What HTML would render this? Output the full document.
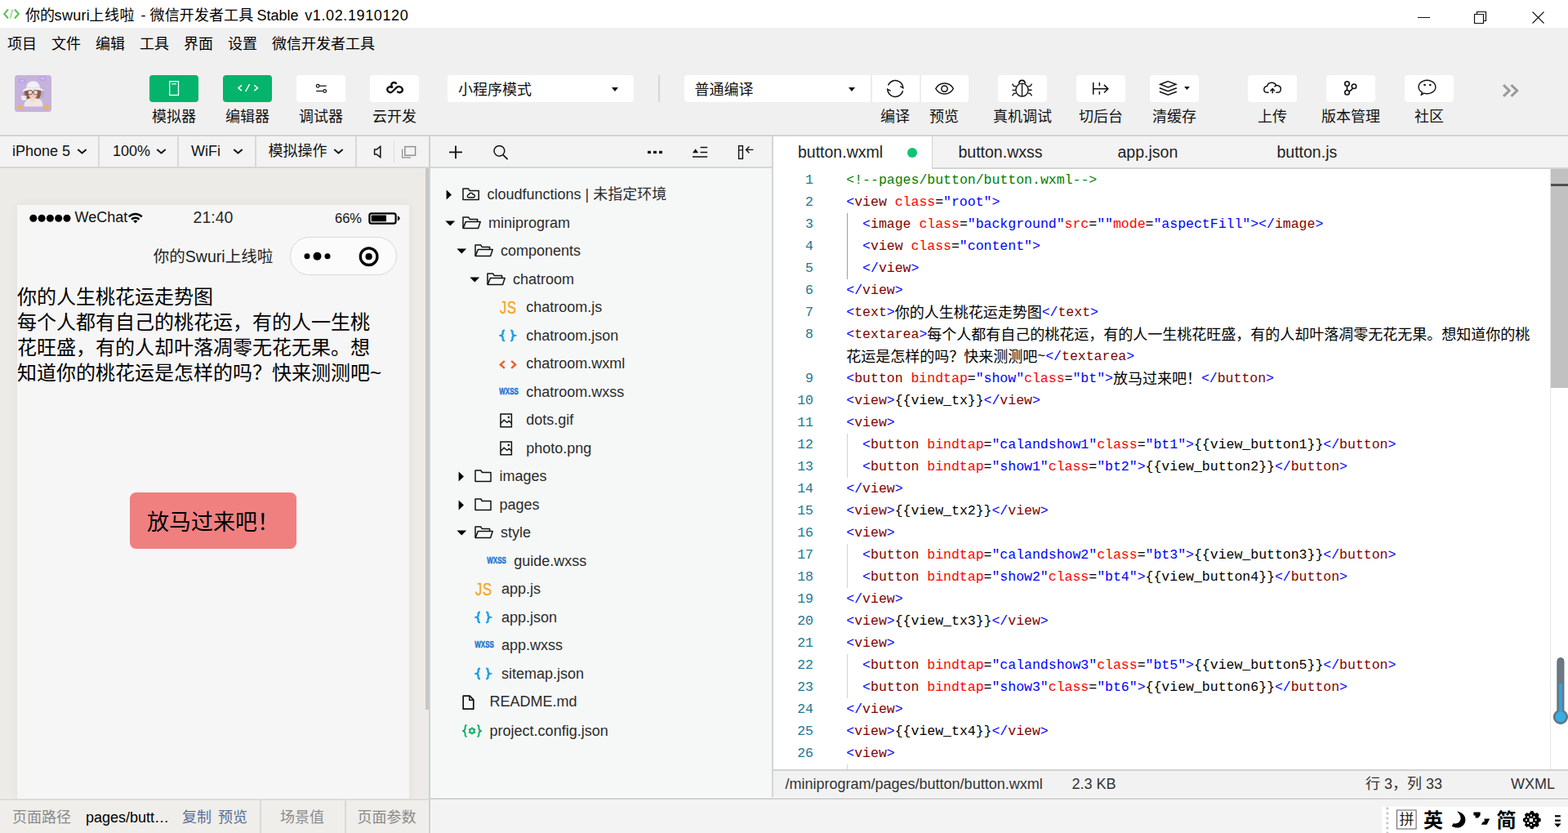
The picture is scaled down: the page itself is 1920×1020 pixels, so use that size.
<!DOCTYPE html><html lang="zh-CN"><head><meta charset="utf-8"><title>WeChat DevTools</title><style>
*{box-sizing:border-box;margin:0;padding:0}
html,body{width:1920px;height:1020px;overflow:hidden;background:#f0f0f0}
body{font-family:"Liberation Sans","Noto Sans CJK SC",sans-serif;color:#000;position:relative;-webkit-font-smoothing:antialiased}
.abs{position:absolute}
.cj{display:inline-block;position:relative;line-height:1;white-space:nowrap;font-family:"Liberation Sans","Noto Sans CJK SC",sans-serif}
#title{left:0;top:0;width:1920px;height:34px;background:#fff}
#title .t{position:absolute;left:31px;top:0;height:34px;line-height:38px;font-size:18px;white-space:nowrap;color:#000}
#menu{left:0;top:34px;width:1920px;height:131px;background:#f0f0f0}
.mi{position:absolute;top:40px;height:28px;line-height:28px;font-size:18px;white-space:nowrap;color:#000}
.tb{position:absolute;top:92px;height:33px;width:60px;border-radius:4px;background:#fff}
.tb.g{background:#03b46c}
.tl{position:absolute;top:130px;height:26px;line-height:26px;font-size:18px;white-space:nowrap;text-align:center;color:#111}
.hl{position:absolute;background:#d3d3d3}
.sel{position:absolute;top:92px;height:33px;background:#fff;border-radius:4px;font-size:18px;line-height:33px;color:#111;white-space:nowrap}
.tri{position:absolute;width:0;height:0;border-left:4.5px solid transparent;border-right:4.5px solid transparent;border-top:5px solid #111}
#simbar{left:0;top:167px;width:525px;height:37px;background:#f3f3f3}
.sbi{position:absolute;top:0;height:37px;line-height:37px;font-size:18px;white-space:nowrap;color:#111}
.vsep{position:absolute;top:167px;width:2px;height:37px;background:#d9d9d9}
#sim{left:0;top:206px;width:525px;height:772px;background:#edebe8}
#phone{left:21px;top:251px;width:480px;height:727px;background:#f6f6f6;box-shadow:0 0 10px rgba(0,0,0,0.06)}
#botl{left:0;top:980px;width:525px;height:40px;background:#efeeeb}
.bt{position:absolute;top:0;height:40px;line-height:43px;font-size:18px;white-space:nowrap}
#treebar{left:527px;top:167px;width:418px;height:37px;background:#f3f3f3}
#tree{left:527px;top:206px;width:418px;height:770px;background:#f6f8f8}
.row{position:absolute;left:0;width:419px;height:34.5px;line-height:34.5px;font-size:18px;color:#2b2b2b;white-space:nowrap}
.row span.n{position:absolute;top:0}
.row svg{position:absolute}
#tabs{left:947px;top:167px;width:973px;height:38px;background:#f3f3f3}
.tab{position:absolute;top:0;height:37px;line-height:38px;font-size:19.5px;color:#222;white-space:nowrap}
#code{left:947px;top:207px;width:952px;height:735px;background:#fff;overflow:hidden}
.ln{position:absolute;left:0;width:49px;text-align:right;height:27px;line-height:27px;font-family:"Liberation Mono",monospace;font-size:16.5px;color:#237893}
.cl{position:absolute;left:89.3px;height:27px;line-height:27px;font-family:"Liberation Mono",monospace;font-size:16.5px;white-space:pre;color:#000}
.cl .cj{font-size:18px;font-family:"Liberation Sans","Noto Sans CJK SC",sans-serif;top:1.5px}
.cl b{display:inline-block;font-weight:400;white-space:pre;overflow:visible}
.c{color:#008000}.b{color:#0000ff}.m{color:#800000}.r{color:#ff0000}.k{color:#000}
.ig{position:absolute;width:1px;background:#d3d3d3}
#status{left:947px;top:944px;width:973px;height:32px;background:#f2f2f2;font-size:18px;color:#333}
#status>span{position:absolute;top:0;height:32px;line-height:33px;white-space:nowrap}
#botr{left:527px;top:979px;width:1393px;height:41px;background:#f3f3f3}
#ime{left:1692px;top:987.5px;width:228px;height:32.5px;background:#fff}
</style></head><body>
<div id="title" class="abs">
<svg class="abs" style="left:4px;top:10px" width="20" height="14" viewBox="0 0 20 14"><path d="M6 1.5 L1.2 7 L6 12.5" fill="none" stroke="#5fc35f" stroke-width="2.2"/><path d="M14 1.5 L18.8 7 L14 12.5" fill="none" stroke="#5fc35f" stroke-width="2.2"/><path d="M11.3 1.5 L8.7 12.5" fill="none" stroke="#9ddc9a" stroke-width="1.8"/></svg>
<div class="t" style="left:31px;letter-spacing:0px"><span class="cj" style="width:36px">你的</span></div>
<div class="t" style="left:66.6px;letter-spacing:0.3px">swuri</div>
<div class="t" style="left:109.2px;letter-spacing:0.7px"><span class="cj" style="width:56.1px">上线啦</span></div>
<div class="t" style="left:172.6px;letter-spacing:0px">-</div>
<div class="t" style="left:183.6px;letter-spacing:0.1px"><span class="cj" style="width:126.7px">微信开发者工具</span></div>
<div class="t" style="left:314.4px;letter-spacing:0px">Stable</div>
<div class="t" style="left:373.2px;letter-spacing:0.62px">v1.02.1910120</div>
<svg class="abs" style="left:1730px;top:8px" width="170" height="26" viewBox="0 0 170 26"><path d="M6 13.5 H21" stroke="#111" stroke-width="1.05" fill="none"/><path d="M75.5 9.5 h11 v11 h-11 z M78.5 9.5 v-3 h11 v11 h-3" stroke="#111" stroke-width="1.2" fill="none"/><path d="M146.5 6.5 l14 14 M160.5 6.5 l-14 14" stroke="#111" stroke-width="1.1" fill="none"/></svg>
</div>
<div id="menu" class="abs"></div>
<div class="mi" style="left:9px"><span class="cj" style="width:36px">项目</span></div>
<div class="mi" style="left:63px"><span class="cj" style="width:36px">文件</span></div>
<div class="mi" style="left:117px"><span class="cj" style="width:36px">编辑</span></div>
<div class="mi" style="left:171px"><span class="cj" style="width:36px">工具</span></div>
<div class="mi" style="left:225px"><span class="cj" style="width:36px">界面</span></div>
<div class="mi" style="left:279px"><span class="cj" style="width:36px">设置</span></div>
<div class="mi" style="left:333px"><span class="cj" style="width:126px">微信开发者工具</span></div>
<svg class="abs" style="left:18px;top:92px" width="45" height="45" viewBox="0 0 45 45">
<rect width="45" height="45" rx="3.5" fill="#c5b3dc"/>
<rect x="4.9" y="4.8" width="8" height="4.8" rx="1" fill="#b7a0ee"/><rect x="6.6" y="5.9" width="4.6" height="2.4" fill="#cdbdf3"/>
<rect x="30.2" y="1.6" width="7.7" height="5.1" rx="1" fill="#b7a0ee"/><rect x="31.8" y="2.8" width="4.6" height="2.5" fill="#cdbdf3"/>
<path d="M9.8 19.4 C9 25 11 28 13 28.6 L14.6 19 Z M35.6 19.2 C36.6 23 35 27.4 32.6 28.6 L31 19 Z" fill="#b5a6c8"/>
<path d="M12 18.6 C11.6 24 13.4 28.4 15.4 29.6 L29.6 29 C31.8 26.6 32.6 22.6 32 18.6 Z" fill="#8d5b47"/>
<path d="M11.6 38.4 C11 33 15 29 18.6 28.6 L27.4 28.6 C31.6 29 35 33 34.2 38.4 C28 38.6 18 38.6 11.6 38.4 Z" fill="#efe7e3"/>
<path d="M16.6 18 C16 24 18 28.6 22.4 29 C26.6 28.6 28.6 24 28 18 Z" fill="#f1cfc0"/>
<path d="M19.6 28 L25.2 28 L25.8 31.6 C24 33.4 21 33.4 19.2 31.6 Z" fill="#f6dccf"/>
<path d="M14.6 15.6 C14 4.6 31 4.4 30.6 15.4 C33 16.6 35.6 18 35.8 19.6 C30 17.4 24 17.6 19 18.2 C15.6 18.6 12 19.4 9.6 20.4 C9.6 18.4 12.4 16.6 14.6 15.6 Z" fill="#f4eff3"/>
<path d="M15.4 14.6 C19 16 27 16 30.2 14.4" fill="none" stroke="#ddd3de" stroke-width="0.8"/>
<circle cx="18.9" cy="21.2" r="2.8" fill="#f3d9cb" stroke="#54403f" stroke-width="0.8"/><circle cx="25.7" cy="21.2" r="2.8" fill="#f3d9cb" stroke="#54403f" stroke-width="0.8"/><path d="M21.6 20.8 H23" stroke="#4b3a3b" stroke-width="0.8"/>
<path d="M21.4 25.6 q1 0.6 2 0" stroke="#d9988c" stroke-width="0.7" fill="none"/>
<path d="M8 27.6 C7.6 24.4 10 25 10.6 25.6 L12.4 25.6 C13.4 24.6 14.8 25 14.4 27.6 C14.8 30 12.6 30.6 11.2 30.4 C9.4 30.6 7.8 29.6 8 27.6 Z" fill="#fbfafc"/>
<circle cx="10" cy="27.4" r="0.55" fill="#8b8ea0"/><circle cx="12.6" cy="27.4" r="0.55" fill="#8b8ea0"/>
<path d="M3.4 38.6 C3.6 37.4 5 37.8 5.6 37.4 L6.2 35.6 C7.2 35.4 7.4 37 7.2 37.6 C8.6 37.4 9.8 38 9.4 39.8 C9.4 41.4 8.6 42 7 41.9 L3.6 41.9 Z" fill="#f0b44f"/>
<path d="M36.2 38.6 C36.4 37.4 37.8 37.8 38.4 37.4 L39 35.6 C40 35.4 40.2 37 40 37.6 C41.4 37.4 42.6 38 42.2 39.8 C42.2 41.4 41.4 42 39.8 41.9 L36.4 41.9 Z" fill="#f0b44f"/>
</svg>
<div class="tb g" style="left:183px"><svg class="abs" style="left:0;top:0" width="60" height="33" viewBox="0 0 60 33"><rect x="24.7" y="7.7" width="10.8" height="16.8" fill="none" stroke="#fff" stroke-width="1.3"/><path d="M27.3 10.8 h5.6" stroke="#fff" stroke-width="1.2"/></svg></div>
<div class="tl" style="left:153px;width:120px"><span class="cj" style="width:54px">模拟器</span></div>
<div class="tb g" style="left:273px"><svg class="abs" style="left:0;top:0" width="60" height="33" viewBox="0 0 60 33"><path d="M23 12.4 L18.9 15.7 L23 19.1 M38.4 12.4 L42.5 15.7 L38.4 19.1 M32.6 11.2 L27.7 20" fill="none" stroke="#fff" stroke-width="1.5"/></svg></div>
<div class="tl" style="left:243px;width:120px"><span class="cj" style="width:54px">编辑器</span></div>
<div class="tb" style="left:363px"><svg class="abs" style="left:0;top:0" width="60" height="33" viewBox="0 0 60 33"><g fill="none" stroke="#111" stroke-width="1.25"><circle cx="26.2" cy="13.2" r="1.8"/><path d="M28.2 13.2 H36.7"/><circle cx="34.7" cy="19.5" r="1.8"/><path d="M24.2 19.5 H32.7"/></g></svg></div>
<div class="tl" style="left:333px;width:120px"><span class="cj" style="width:54px">调试器</span></div>
<div class="tb" style="left:453px"><svg class="abs" style="left:0;top:0" width="60" height="33" viewBox="0 0 60 33"><path d="M32 9.9 C29.6 8.3 26.4 9.2 26.3 11.7 C26.2 13 26.6 13.8 27.2 14.9 C24 13.3 21 15.1 21.2 17.7 C21.4 20.7 25 22.5 27.6 20 L32.4 15.3 C34.4 13.3 38.4 13.7 39.6 16.7 C40.6 19.9 37.6 22.5 34 20.5" fill="none" stroke="#111" stroke-width="2.4" stroke-linecap="round" stroke-linejoin="round"/></svg></div>
<div class="tl" style="left:423px;width:120px"><span class="cj" style="width:54px">云开发</span></div>
<div class="sel" style="left:548px;width:228px"><span class="abs" style="left:13px;top:1.5px"><span class="cj" style="width:90px">小程序模式</span></span><i class="tri" style="left:200.5px;top:15px"></i></div>
<div class="hl" style="left:806px;top:92px;width:2px;height:33px;background:#d6d6d6"></div>
<div class="sel" style="left:838px;width:348px"><span class="abs" style="left:12.5px;top:1.5px"><span class="cj" style="width:72px">普通编译</span></span><i class="tri" style="left:200.5px;top:15px"></i><div class="hl" style="left:228px;top:0;width:1.5px;height:33px;background:#ececec"></div><div class="hl" style="left:288px;top:0;width:1.5px;height:33px;background:#ececec"></div><svg class="abs" style="left:228px;top:0" width="120" height="33" viewBox="0 0 120 33"><path d="M21.5 12.4 A9.6 9.6 0 0 1 39.9 15.7 L36.3 13.7 M39.6 19.2 A9.6 9.6 0 0 1 20.7 17.2 L24.6 19.4" fill="none" stroke="#111" stroke-width="1.5"/><path d="M79.8 16.5 C84.5 7.8 96.7 7.8 101.4 16.5 C96.7 25.2 84.5 25.2 79.8 16.5 Z" fill="none" stroke="#111" stroke-width="1.5"/><circle cx="90.5" cy="16.6" r="3.7" fill="none" stroke="#111" stroke-width="1.5"/></svg></div>
<div class="tl" style="left:1036px;width:120px"><span class="cj" style="width:36px">编译</span></div>
<div class="tl" style="left:1096px;width:120px"><span class="cj" style="width:36px">预览</span></div>
<div class="tb" style="left:1222px"><svg class="abs" style="left:0;top:0" width="60" height="33" viewBox="0 0 60 33"><g fill="none" stroke="#111" stroke-width="1.35"><ellipse cx="29.5" cy="18.1" rx="7.6" ry="8"/><path d="M29.5 10.1 V26.1"/><path d="M25.7 10.6 C26 4.9 33 4.9 33.3 10.6" stroke-width="1.6"/><path d="M22.3 13.6 H19.4 L17.5 10.7 M21.9 18.4 H17.5 M22.4 22.4 H19.6 L17.5 25.3 M36.7 13.6 H39.6 L41.5 10.7 M37.1 18.2 H41.5 M36.6 22.4 H39.4 L41.5 25.3"/></g></svg></div>
<div class="tl" style="left:1192px;width:120px"><span class="cj" style="width:72px">真机调试</span></div>
<div class="tb" style="left:1318px"><svg class="abs" style="left:0;top:0" width="60" height="33" viewBox="0 0 60 33"><path d="M20.7 9 V23.8 M28.3 9 V13.2 M28.3 20 V23.8 M20.7 16.7 H38.6 M33.9 11.9 L38.8 16.7 L33.9 21.5" fill="none" stroke="#111" stroke-width="1.5"/></svg></div>
<div class="tl" style="left:1288px;width:120px"><span class="cj" style="width:54px">切后台</span></div>
<div class="tb" style="left:1408px"><svg class="abs" style="left:0;top:0" width="60" height="33" viewBox="0 0 60 33"><path d="M22.3 7.6 L31.9 11.3 L22.3 14.9 L12.7 11.3 Z M11.8 15.7 L22.3 19.8 L32.8 15.7 M11.8 20.2 L22.3 24.2 L32.8 20.2" fill="none" stroke="#111" stroke-width="1.45" stroke-linejoin="miter"/><path d="M42 14 h6.8 l-3.4 4 z" fill="#111"/></svg></div>
<div class="tl" style="left:1378px;width:120px"><span class="cj" style="width:54px">清缓存</span></div>
<div class="tb" style="left:1528px"><svg class="abs" style="left:0;top:0" width="60" height="33" viewBox="0 0 60 33"><path d="M25.6 21.3 H23.6 C18.4 21.3 18.6 14.2 23.6 13.6 C24.6 7.8 33 8 34.6 12.6 M32.4 14.4 C33.6 12.6 36 12.2 37.6 13 C41.6 14.6 41.2 21.3 36.2 21.3 H34.4" fill="none" stroke="#111" stroke-width="1.5"/><path d="M30.2 22.2 V17 M27.5 19.4 L30.2 16.6 L32.9 19.4" fill="none" stroke="#111" stroke-width="1.5"/></svg></div>
<div class="tl" style="left:1498px;width:120px"><span class="cj" style="width:36px">上传</span></div>
<div class="tb" style="left:1624px"><svg class="abs" style="left:0;top:0" width="60" height="33" viewBox="0 0 60 33"><g fill="none" stroke="#111" stroke-width="1.6"><circle cx="25.5" cy="10.5" r="2.75"/><circle cx="25.5" cy="21.3" r="2.75"/><circle cx="34" cy="13.7" r="2.75"/><path d="M25.5 13.3 V18.5 M32.4 16.2 C31.4 18.2 29.6 19.2 28 20"/></g></svg></div>
<div class="tl" style="left:1594px;width:120px"><span class="cj" style="width:72px">版本管理</span></div>
<div class="tb" style="left:1720px"><svg class="abs" style="left:0;top:0" width="60" height="33" viewBox="0 0 60 33"><path d="M21.5 21.2 A10.4 8.2 0 1 1 23.6 22.1 L20.2 24.3 Z" fill="none" stroke="#111" stroke-width="1.4" stroke-linejoin="round"/><circle cx="24.5" cy="12" r="1.3" fill="#111"/><circle cx="31.3" cy="12" r="1.3" fill="#111"/></svg></div>
<div class="tl" style="left:1690px;width:120px"><span class="cj" style="width:36px">社区</span></div>
<svg class="abs" style="left:1836px;top:100px" width="28" height="22" viewBox="0 0 28 22"><path d="M5 4.2 L12.2 11 L5 17.8 M14.5 4.2 L21.7 11 L14.5 17.8" fill="none" stroke="#9a9a9a" stroke-width="3"/></svg>
<div class="hl" style="left:0;top:165px;width:1920px;height:2px"></div>
<div id="simbar" class="abs">
<div class="sbi" style="left:15px">iPhone 5</div><svg class="abs" style="left:93.5px;top:14px" width="13" height="9" viewBox="0 0 13 9"><path d="M1.3 2 L6.5 6.5 L11.7 2" fill="none" stroke="#111" stroke-width="2"/></svg>
<div class="sbi" style="left:138px">100%</div><svg class="abs" style="left:191px;top:14px" width="13" height="9" viewBox="0 0 13 9"><path d="M1.3 2 L6.5 6.5 L11.7 2" fill="none" stroke="#111" stroke-width="2"/></svg>
<div class="sbi" style="left:234px">WiFi</div><svg class="abs" style="left:284.5px;top:14px" width="13" height="9" viewBox="0 0 13 9"><path d="M1.3 2 L6.5 6.5 L11.7 2" fill="none" stroke="#111" stroke-width="2"/></svg>
<div class="sbi" style="left:328.5px"><span class="cj" style="width:72px">模拟操作</span></div><svg class="abs" style="left:407.5px;top:14px" width="13" height="9" viewBox="0 0 13 9"><path d="M1.3 2 L6.5 6.5 L11.7 2" fill="none" stroke="#111" stroke-width="2"/></svg>
<svg class="abs" style="left:455px;top:9px" width="16" height="20" viewBox="0 0 16 20"><path d="M3.6 7 H6.2 L10.8 3.4 V16.6 L6.2 13 H3.6 Z" fill="none" stroke="#111" stroke-width="1.5" stroke-linejoin="miter"/></svg>
<div class="hl" style="left:481.5px;top:6px;width:1px;height:26px;background:#dcdcdc"></div>
<svg class="abs" style="left:490px;top:10px" width="22" height="18" viewBox="0 0 22 18"><rect x="5.8" y="2.6" width="12.8" height="10.6" fill="none" stroke="#8c8c8c" stroke-width="1.4"/><path d="M2.6 5.4 V15.8 H13" fill="none" stroke="#8c8c8c" stroke-width="1.2"/></svg>
</div>
<div class="vsep" style="left:120px"></div>
<div class="vsep" style="left:217px"></div>
<div class="vsep" style="left:312px"></div>
<div class="vsep" style="left:435px"></div>
<div class="hl" style="left:0;top:204px;width:947px;height:2px;background:#d6d6d6"></div>
<div id="sim" class="abs"></div>
<div class="hl" style="left:521px;top:206px;width:4px;height:663px;background:#c6c6c6"></div>
<div id="phone" class="abs">
<svg class="abs" style="left:0;top:0" width="480" height="34" viewBox="0 0 480 34"><circle cx="19.8" cy="16.2" r="4.5" fill="#000"/><circle cx="30.1" cy="16.2" r="4.5" fill="#000"/><circle cx="40.4" cy="16.2" r="4.5" fill="#000"/><circle cx="50.7" cy="16.2" r="4.5" fill="#000"/><circle cx="61.0" cy="16.2" r="4.5" fill="#000"/><path transform="translate(0.6,-0.9) scale(0.985)" transform-origin="144 16" d="M135.2 14.4 C140 9.2 148.4 9.2 153.2 14.4 L151.4 16.2 C147.6 12.2 140.8 12.2 137 16.2 Z M138.6 17.8 C141.6 14.6 146.8 14.6 149.8 17.8 L148 19.6 C146 17.4 142.4 17.4 140.4 19.6 Z M144.2 23.2 L141.6 20.6 C143 19.2 145.4 19.2 146.8 20.6 Z" fill="#000"/><rect x="431.4" y="10.3" width="32.2" height="12.3" rx="2.4" fill="none" stroke="#000" stroke-width="2.2"/><rect x="433.7" y="12.6" width="18.3" height="7.7" rx="0.6" fill="#000"/><path d="M465.9 13.3 q5.8 3.1 0 6.2 z" fill="#000"/></svg>
<div class="abs" style="left:70.5px;top:3px;font-size:18px;line-height:24px;color:#111">WeChat</div>
<div class="abs" style="left:140px;width:200px;text-align:center;top:3px;font-size:19.5px;line-height:24px;color:#2a2a2a">21:40</div>
<div class="abs" style="left:389px;top:4px;font-size:16.5px;line-height:24px;color:#111">66%</div>
<div class="abs" style="left:40px;width:400px;text-align:center;top:48px;font-size:19.5px;line-height:30px;color:#222;white-space:nowrap"><span class="cj" style="width:39px">你的</span>Swuri<span class="cj" style="width:58.5px">上线啦</span></div>
<div class="abs" style="left:334px;top:38.8px;width:131px;height:47.7px;border-radius:24px;border:1.5px solid #d9d9d9;background:#fbfbfb"></div>
<svg class="abs" style="left:334px;top:39.5px" width="131" height="48" viewBox="0 0 131 48"><circle cx="21" cy="22.7" r="3.5" fill="#000"/><circle cx="33.5" cy="22.7" r="5" fill="#000"/><circle cx="46" cy="22.7" r="3.5" fill="#000"/><circle cx="96.6" cy="23.2" r="10.3" fill="none" stroke="#000" stroke-width="3.3"/><circle cx="96.6" cy="23.2" r="4.1" fill="#000"/></svg>
<div class="abs" style="left:0;top:97px;width:470px;font-size:24px;line-height:31px;color:#000"><span class="cj" style="width:240px">你的人生桃花运走势图</span><br><span class="cj" style="width:432px">每个人都有自己的桃花运，有的人一生桃</span><br><span class="cj" style="width:432px">花旺盛，有的人却叶落凋零无花无果。想</span><br><span class="cj" style="width:432px">知道你的桃花运是怎样的吗？快来测测吧</span>~</div>
<div class="abs" style="left:138px;top:352px;width:204px;height:69px;border-radius:7.5px;background:#f08080;font-size:27px;line-height:75px;text-align:center;color:#000;white-space:nowrap"><span class="cj" style="width:162px">放马过来吧！</span></div>
</div>
<div class="hl" style="left:0;top:978px;width:525px;height:2px;background:#dcdbd9"></div>
<div class="hl" style="left:527px;top:976px;width:1393px;height:1px;background:#fdfdfd"></div>
<div class="hl" style="left:527px;top:977px;width:1393px;height:2px;background:#d2d2d2"></div>
<div id="botl" class="abs">
<div class="bt" style="left:15px;color:#8a8a8a"><span class="cj" style="width:72px">页面路径</span></div>
<div class="bt" style="left:105px;color:#000">pages/butt…</div>
<div class="bt" style="left:223px;color:#5b6f97"><span class="cj" style="width:36px">复制</span></div>
<div class="bt" style="left:267px;color:#5b6f97"><span class="cj" style="width:36px">预览</span></div>
<div class="bt" style="left:343px;color:#8a8a8a"><span class="cj" style="width:54px">场景值</span></div>
<div class="bt" style="left:437.5px;color:#8a8a8a"><span class="cj" style="width:72px">页面参数</span></div>
<div class="hl" style="left:318px;top:0;width:2px;height:40px;background:#d9d9d9"></div>
<div class="hl" style="left:422px;top:0;width:2px;height:40px;background:#d9d9d9"></div>
</div>
<div class="hl" style="left:525px;top:167px;width:2px;height:853px;background:#d1d1d1"></div>
<div id="treebar" class="abs">
<svg class="abs" style="left:0;top:0" width="419" height="37" viewBox="0 0 419 37"><path d="M23 19.3 H39 M31 11.4 V27.2" stroke="#111" stroke-width="1.8" fill="none"/><circle cx="84.4" cy="17.8" r="6.4" fill="none" stroke="#111" stroke-width="1.5"/><path d="M89 22.6 L94.6 28.2" stroke="#111" stroke-width="1.7"/><rect x="266" y="17.8" width="4" height="3.2" fill="#111"/><rect x="273" y="17.8" width="4" height="3.2" fill="#111"/><rect x="280" y="17.8" width="4" height="3.2" fill="#111"/><path d="M321 20.2 l3.6 -5 l3.6 5 z" fill="#111"/><path d="M330.6 13.6 H339.2 M330.6 19.4 H339.2 M321 24.9 H339.2" stroke="#111" stroke-width="1.5"/><rect x="377.6" y="11.6" width="4.8" height="15.8" fill="none" stroke="#111" stroke-width="1.4"/><path d="M377.6 16.8 H382.4" stroke="#111" stroke-width="1.2"/><path d="M386.6 16.4 H395.4 M390.4 12.6 L386.6 16.4 L390.4 20.2" fill="none" stroke="#111" stroke-width="1.4"/></svg></div>
<div id="tree" class="abs">
<div class="row" style="top:15.25px"><svg style="left:18.6px;top:11px" width="8" height="13" viewBox="0 0 8 13"><path d="M0.6 0.6 L7 6.5 L0.6 12.4 Z" fill="#000"/></svg><svg style="left:38.6px;top:9px" width="22" height="16" viewBox="0 0 22 16"><path d="M1 14.6 V1 H7.4 L9 3.4 H20.2 V14.6 Z" fill="none" stroke="#111" stroke-width="1.5" stroke-linejoin="round"/><path d="M8.2 11.8 C5.6 11.8 5.6 8.6 8 8.4 C8.4 5.6 12.6 5.6 13 8 C16 7.8 16.2 11.8 13.6 11.8 Z" fill="none" stroke="#111" stroke-width="1.4"/></svg><span class="n" style="left:69.4px">cloudfunctions | <span class="cj" style="width:90px">未指定环境</span></span></div>
<div class="row" style="top:49.75px"><svg style="left:18px;top:14.2px" width="13" height="7" viewBox="0 0 13 7"><path d="M0.4 0.4 H12.2 L6.3 6.4 Z" fill="#000"/></svg><svg style="left:39px;top:9.2px" width="24" height="16" viewBox="0 0 24 16"><path d="M1 14.4 V1 H7.6 L9.2 3.4 H18.6 V6.2" fill="none" stroke="#111" stroke-width="1.5" stroke-linejoin="round"/><path d="M1.2 14.4 L4.4 6.4 H22.2 L19.6 14.4 Z" fill="none" stroke="#111" stroke-width="1.5" stroke-linejoin="round"/></svg><span class="n" style="left:71px">miniprogram</span></div>
<div class="row" style="top:84.25px"><svg style="left:32.4px;top:14.2px" width="13" height="7" viewBox="0 0 13 7"><path d="M0.4 0.4 H12.2 L6.3 6.4 Z" fill="#000"/></svg><svg style="left:54px;top:9.2px" width="24" height="16" viewBox="0 0 24 16"><path d="M1 14.4 V1 H7.6 L9.2 3.4 H18.6 V6.2" fill="none" stroke="#111" stroke-width="1.5" stroke-linejoin="round"/><path d="M1.2 14.4 L4.4 6.4 H22.2 L19.6 14.4 Z" fill="none" stroke="#111" stroke-width="1.5" stroke-linejoin="round"/></svg><span class="n" style="left:86px">components</span></div>
<div class="row" style="top:118.75px"><svg style="left:48.2px;top:14.2px" width="13" height="7" viewBox="0 0 13 7"><path d="M0.4 0.4 H12.2 L6.3 6.4 Z" fill="#000"/></svg><svg style="left:69px;top:9.2px" width="24" height="16" viewBox="0 0 24 16"><path d="M1 14.4 V1 H7.6 L9.2 3.4 H18.6 V6.2" fill="none" stroke="#111" stroke-width="1.5" stroke-linejoin="round"/><path d="M1.2 14.4 L4.4 6.4 H22.2 L19.6 14.4 Z" fill="none" stroke="#111" stroke-width="1.5" stroke-linejoin="round"/></svg><span class="n" style="left:101px">chatroom</span></div>
<div class="row" style="top:153.25px"><span class="n" style="left:85px;top:1px;font-size:22.6px;color:#f5a623;letter-spacing:1px;transform:scaleX(0.73);transform-origin:0 50%;-webkit-text-stroke:0.4px #f5a623">JS</span><span class="n" style="left:117.3px">chatroom.js</span></div>
<div class="row" style="top:187.75px"><svg style="left:84px;top:9.6px" width="22" height="16" viewBox="0 0 22 16"><path d="M7 1.6 C4.4 1.6 4.7 3 4.7 4.6 C4.7 6.4 4.2 7.4 2.4 7.9 C4.2 8.4 4.7 9.4 4.7 11.2 C4.7 12.8 4.4 14.2 7 14.2 M14.2 1.6 C16.8 1.6 16.5 3 16.5 4.6 C16.5 6.4 17 7.4 18.8 7.9 C17 8.4 16.5 9.4 16.5 11.2 C16.5 12.8 16.8 14.2 14.2 14.2" fill="none" stroke="#1b9fe6" stroke-width="2.4"/></svg><span class="n" style="left:117.3px">chatroom.json</span></div>
<div class="row" style="top:222.25px"><svg style="left:84px;top:12.4px" width="23" height="11" viewBox="0 0 23 11"><path d="M6.8 1 L1.8 5.4 L6.8 9.8 M15.2 1 L20.2 5.4 L15.2 9.8" fill="none" stroke="#f4571f" stroke-width="2.3"/></svg><span class="n" style="left:117.3px">chatroom.wxml</span></div>
<div class="row" style="top:256.75px"><svg style="left:84px;top:9px" width="26" height="14" viewBox="0 0 26 14"><text x="0.3" y="11.4" style="font-family:Liberation Sans,sans-serif;font-weight:700;font-size:10.8px" fill="#1c76d2" stroke="#1c76d2" stroke-width="0.45" textLength="23.6" lengthAdjust="spacingAndGlyphs">WXSS</text></svg><span class="n" style="left:117.3px">chatroom.wxss</span></div>
<div class="row" style="top:291.25px"><svg style="left:85.4px;top:8.6px" width="17" height="19" viewBox="0 0 17 19"><rect x="1" y="1" width="13.4" height="15.8" fill="none" stroke="#111" stroke-width="1.5"/><path d="M1 12.4 L5.2 8.2 L8.8 11.4 L11.4 9.4 L14.4 12.2" fill="none" stroke="#111" stroke-width="1.4"/><circle cx="10.8" cy="5" r="1.25" fill="#111"/></svg><span class="n" style="left:117.3px">dots.gif</span></div>
<div class="row" style="top:325.75px"><svg style="left:85.4px;top:8.6px" width="17" height="19" viewBox="0 0 17 19"><rect x="1" y="1" width="13.4" height="15.8" fill="none" stroke="#111" stroke-width="1.5"/><path d="M1 12.4 L5.2 8.2 L8.8 11.4 L11.4 9.4 L14.4 12.2" fill="none" stroke="#111" stroke-width="1.4"/><circle cx="10.8" cy="5" r="1.25" fill="#111"/></svg><span class="n" style="left:117.3px">photo.png</span></div>
<div class="row" style="top:360.25px"><svg style="left:33.6px;top:11px" width="8" height="13" viewBox="0 0 8 13"><path d="M0.6 0.6 L7 6.5 L0.6 12.4 Z" fill="#000"/></svg><svg style="left:54px;top:9.2px" width="22" height="16" viewBox="0 0 22 16"><path d="M1 14.4 V1 H7.8 L9.4 3.5 H20 V14.4 Z" fill="none" stroke="#111" stroke-width="1.5" stroke-linejoin="round"/></svg><span class="n" style="left:84.4px">images</span></div>
<div class="row" style="top:394.75px"><svg style="left:33.6px;top:11px" width="8" height="13" viewBox="0 0 8 13"><path d="M0.6 0.6 L7 6.5 L0.6 12.4 Z" fill="#000"/></svg><svg style="left:54px;top:9.2px" width="22" height="16" viewBox="0 0 22 16"><path d="M1 14.4 V1 H7.8 L9.4 3.5 H20 V14.4 Z" fill="none" stroke="#111" stroke-width="1.5" stroke-linejoin="round"/></svg><span class="n" style="left:84.4px">pages</span></div>
<div class="row" style="top:429.25px"><svg style="left:32.4px;top:14.2px" width="13" height="7" viewBox="0 0 13 7"><path d="M0.4 0.4 H12.2 L6.3 6.4 Z" fill="#000"/></svg><svg style="left:54px;top:9.2px" width="24" height="16" viewBox="0 0 24 16"><path d="M1 14.4 V1 H7.6 L9.2 3.4 H18.6 V6.2" fill="none" stroke="#111" stroke-width="1.5" stroke-linejoin="round"/><path d="M1.2 14.4 L4.4 6.4 H22.2 L19.6 14.4 Z" fill="none" stroke="#111" stroke-width="1.5" stroke-linejoin="round"/></svg><span class="n" style="left:86px">style</span></div>
<div class="row" style="top:463.75px"><svg style="left:69px;top:9px" width="26" height="14" viewBox="0 0 26 14"><text x="0.3" y="11.4" style="font-family:Liberation Sans,sans-serif;font-weight:700;font-size:10.8px" fill="#1c76d2" stroke="#1c76d2" stroke-width="0.45" textLength="23.6" lengthAdjust="spacingAndGlyphs">WXSS</text></svg><span class="n" style="left:102.3px">guide.wxss</span></div>
<div class="row" style="top:498.25px"><span class="n" style="left:54.6px;top:1px;font-size:22.6px;color:#f5a623;letter-spacing:1px;transform:scaleX(0.73);transform-origin:0 50%;-webkit-text-stroke:0.4px #f5a623">JS</span><span class="n" style="left:87px">app.js</span></div>
<div class="row" style="top:532.75px"><svg style="left:54.4px;top:9.6px" width="22" height="16" viewBox="0 0 22 16"><path d="M7 1.6 C4.4 1.6 4.7 3 4.7 4.6 C4.7 6.4 4.2 7.4 2.4 7.9 C4.2 8.4 4.7 9.4 4.7 11.2 C4.7 12.8 4.4 14.2 7 14.2 M14.2 1.6 C16.8 1.6 16.5 3 16.5 4.6 C16.5 6.4 17 7.4 18.8 7.9 C17 8.4 16.5 9.4 16.5 11.2 C16.5 12.8 16.8 14.2 14.2 14.2" fill="none" stroke="#1b9fe6" stroke-width="2.4"/></svg><span class="n" style="left:87px">app.json</span></div>
<div class="row" style="top:567.25px"><svg style="left:54px;top:9px" width="26" height="14" viewBox="0 0 26 14"><text x="0.3" y="11.4" style="font-family:Liberation Sans,sans-serif;font-weight:700;font-size:10.8px" fill="#1c76d2" stroke="#1c76d2" stroke-width="0.45" textLength="23.6" lengthAdjust="spacingAndGlyphs">WXSS</text></svg><span class="n" style="left:87px">app.wxss</span></div>
<div class="row" style="top:601.75px"><svg style="left:54.4px;top:9.6px" width="22" height="16" viewBox="0 0 22 16"><path d="M7 1.6 C4.4 1.6 4.7 3 4.7 4.6 C4.7 6.4 4.2 7.4 2.4 7.9 C4.2 8.4 4.7 9.4 4.7 11.2 C4.7 12.8 4.4 14.2 7 14.2 M14.2 1.6 C16.8 1.6 16.5 3 16.5 4.6 C16.5 6.4 17 7.4 18.8 7.9 C17 8.4 16.5 9.4 16.5 11.2 C16.5 12.8 16.8 14.2 14.2 14.2" fill="none" stroke="#1b9fe6" stroke-width="2.4"/></svg><span class="n" style="left:87px">sitemap.json</span></div>
<div class="row" style="top:636.25px"><svg style="left:38.6px;top:8.6px" width="17" height="20" viewBox="0 0 17 20"><path d="M1.2 1.2 H9.2 L13.8 5.8 V17.2 H1.2 Z" fill="none" stroke="#111" stroke-width="1.7" stroke-linejoin="round"/><path d="M8.8 1.4 V6.2 H13.6" fill="none" stroke="#111" stroke-width="1.4"/></svg><span class="n" style="left:72.6px">README.md</span></div>
<div class="row" style="top:671.75px"><svg style="left:39.4px;top:9.6px" width="24" height="16" viewBox="0 0 24 16"><path d="M5.6 1 C3.4 1 3.6 2.4 3.6 4.4 C3.6 6.4 3 7.4 1.2 8 C3 8.6 3.6 9.6 3.6 11.6 C3.6 13.6 3.4 15 5.6 15 M18.4 1 C20.6 1 20.4 2.4 20.4 4.4 C20.4 6.4 21 7.4 22.8 8 C21 8.6 20.4 9.6 20.4 11.6 C20.4 13.6 20.6 15 18.4 15" fill="none" stroke="#19b06a" stroke-width="2"/><circle cx="12" cy="8" r="2.7" fill="none" stroke="#19b06a" stroke-width="2"/><path d="M12 3.4 V4.8 M12 11.2 V12.6 M8 5.7 L9.2 6.4 M14.8 9.6 L16 10.3 M8 10.3 L9.2 9.6 M14.8 6.4 L16 5.7" stroke="#19b06a" stroke-width="1.8"/></svg><span class="n" style="left:72.6px">project.config.json</span></div>
</div>
<div class="hl" style="left:945px;top:167px;width:2px;height:809px;background:#d4d4d4"></div>
<div id="tabs" class="abs">
<div class="abs" style="left:0;top:0;width:193.5px;height:40px;background:#fff"></div><div class="abs" style="left:193.5px;top:0;width:1.6px;height:40px;background:#d2d2d2"></div>
<div class="tab" style="left:30px">button.wxml</div>
<div class="abs" style="left:163.9px;top:14px;width:12.2px;height:12.2px;border-radius:50%;background:#0fc373"></div>
<div class="tab" style="left:226.5px">button.wxss</div>
<div class="tab" style="left:421.5px">app.json</div>
<div class="tab" style="left:616.5px">button.js</div>
</div>
<div class="abs" style="left:1142px;top:204px;width:778px;height:1px;background:#f3f3f3"></div><div class="abs" style="left:1140.5px;top:205px;width:780px;height:2px;background:#d4d4d4"></div><div class="abs" style="left:947px;top:204px;width:193.5px;height:3px;background:#fff"></div>
<div id="code" class="abs">
<div class="ln" style="top:0px">1</div>
<div class="cl" style="top:0px"><b class="c" style="width:118.8px">&lt;!--pages/bu</b><b class="c" style="width:118.8px">tton/button.</b><b class="c" style="width:69.3px">wxml--&gt;</b></div>
<div class="ln" style="top:27px">2</div>
<div class="cl" style="top:27px"><b class="b" style="width:9.9px">&lt;</b><b class="m" style="width:39.6px">view</b><b class="k" style="width:9.9px"> </b><b class="r" style="width:49.5px">class</b><b class="k" style="width:9.9px">=</b><b class="b" style="width:59.4px">"root"</b><b class="b" style="width:9.9px">&gt;</b></div>
<div class="ln" style="top:54px">3</div>
<div class="cl" style="top:54px"><b class="k" style="width:19.8px">  </b><b class="b" style="width:9.9px">&lt;</b><b class="m" style="width:49.5px">image</b><b class="k" style="width:9.9px"> </b><b class="r" style="width:49.5px">class</b><b class="k" style="width:9.9px">=</b><b class="b" style="width:118.8px">"background"</b><b class="r" style="width:29.7px">src</b><b class="k" style="width:9.9px">=</b><b class="b" style="width:19.8px">""</b><b class="r" style="width:39.6px">mode</b><b class="k" style="width:9.9px">=</b><b class="b" style="width:118.8px">"aspectFill"</b><b class="b" style="width:9.9px">&gt;</b><b class="b" style="width:19.8px">&lt;/</b><b class="m" style="width:49.5px">image</b><b class="b" style="width:9.9px">&gt;</b></div>
<div class="ln" style="top:81px">4</div>
<div class="cl" style="top:81px"><b class="k" style="width:19.8px">  </b><b class="b" style="width:9.9px">&lt;</b><b class="m" style="width:39.6px">view</b><b class="k" style="width:9.9px"> </b><b class="r" style="width:49.5px">class</b><b class="k" style="width:9.9px">=</b><b class="b" style="width:89.1px">"content"</b><b class="b" style="width:9.9px">&gt;</b></div>
<div class="ln" style="top:108px">5</div>
<div class="cl" style="top:108px"><b class="k" style="width:19.8px">  </b><b class="b" style="width:19.8px">&lt;/</b><b class="m" style="width:39.6px">view</b><b class="b" style="width:9.9px">&gt;</b></div>
<div class="ln" style="top:135px">6</div>
<div class="cl" style="top:135px"><b class="b" style="width:19.8px">&lt;/</b><b class="m" style="width:39.6px">view</b><b class="b" style="width:9.9px">&gt;</b></div>
<div class="ln" style="top:162px">7</div>
<div class="cl" style="top:162px"><b class="b" style="width:9.9px">&lt;</b><b class="m" style="width:39.6px">text</b><b class="b" style="width:9.9px">&gt;</b><span class="cj" style="width:180px">你的人生桃花运走势图</span><b class="b" style="width:19.8px">&lt;/</b><b class="m" style="width:39.6px">text</b><b class="b" style="width:9.9px">&gt;</b></div>
<div class="ln" style="top:189px">8</div>
<div class="cl" style="top:189px"><b class="b" style="width:9.9px">&lt;</b><b class="m" style="width:79.2px">textarea</b><b class="b" style="width:9.9px">&gt;</b><span class="cj" style="width:738px">每个人都有自己的桃花运，有的人一生桃花旺盛，有的人却叶落凋零无花无果。想知道你的桃</span></div>
<div class="cl" style="top:216px"><span class="cj" style="width:234px">花运是怎样的吗？快来测测吧</span><b class="k" style="width:9.9px">~</b><b class="b" style="width:19.8px">&lt;/</b><b class="m" style="width:79.2px">textarea</b><b class="b" style="width:9.9px">&gt;</b></div>
<div class="ln" style="top:243px">9</div>
<div class="cl" style="top:243px"><b class="b" style="width:9.9px">&lt;</b><b class="m" style="width:59.4px">button</b><b class="k" style="width:9.9px"> </b><b class="r" style="width:69.3px">bindtap</b><b class="k" style="width:9.9px">=</b><b class="b" style="width:59.4px">"show"</b><b class="r" style="width:49.5px">class</b><b class="k" style="width:9.9px">=</b><b class="b" style="width:39.6px">"bt"</b><b class="b" style="width:9.9px">&gt;</b><span class="cj" style="width:108px">放马过来吧！</span><b class="b" style="width:19.8px">&lt;/</b><b class="m" style="width:59.4px">button</b><b class="b" style="width:9.9px">&gt;</b></div>
<div class="ln" style="top:270px">10</div>
<div class="cl" style="top:270px"><b class="b" style="width:9.9px">&lt;</b><b class="m" style="width:39.6px">view</b><b class="b" style="width:9.9px">&gt;</b><b class="k" style="width:108.9px">{{view_tx}}</b><b class="b" style="width:19.8px">&lt;/</b><b class="m" style="width:39.6px">view</b><b class="b" style="width:9.9px">&gt;</b></div>
<div class="ln" style="top:297px">11</div>
<div class="cl" style="top:297px"><b class="b" style="width:9.9px">&lt;</b><b class="m" style="width:39.6px">view</b><b class="b" style="width:9.9px">&gt;</b></div>
<div class="ln" style="top:324px">12</div>
<div class="cl" style="top:324px"><b class="k" style="width:19.8px">  </b><b class="b" style="width:9.9px">&lt;</b><b class="m" style="width:59.4px">button</b><b class="k" style="width:9.9px"> </b><b class="r" style="width:69.3px">bindtap</b><b class="k" style="width:9.9px">=</b><b class="b" style="width:118.8px">"calandshow1</b><b class="b" style="width:9.9px">"</b><b class="r" style="width:49.5px">class</b><b class="k" style="width:9.9px">=</b><b class="b" style="width:49.5px">"bt1"</b><b class="b" style="width:9.9px">&gt;</b><b class="k" style="width:118.8px">{{view_butto</b><b class="k" style="width:39.6px">n1}}</b><b class="b" style="width:19.8px">&lt;/</b><b class="m" style="width:59.4px">button</b><b class="b" style="width:9.9px">&gt;</b></div>
<div class="ln" style="top:351px">13</div>
<div class="cl" style="top:351px"><b class="k" style="width:19.8px">  </b><b class="b" style="width:9.9px">&lt;</b><b class="m" style="width:59.4px">button</b><b class="k" style="width:9.9px"> </b><b class="r" style="width:69.3px">bindtap</b><b class="k" style="width:9.9px">=</b><b class="b" style="width:69.3px">"show1"</b><b class="r" style="width:49.5px">class</b><b class="k" style="width:9.9px">=</b><b class="b" style="width:49.5px">"bt2"</b><b class="b" style="width:9.9px">&gt;</b><b class="k" style="width:118.8px">{{view_butto</b><b class="k" style="width:39.6px">n2}}</b><b class="b" style="width:19.8px">&lt;/</b><b class="m" style="width:59.4px">button</b><b class="b" style="width:9.9px">&gt;</b></div>
<div class="ln" style="top:378px">14</div>
<div class="cl" style="top:378px"><b class="b" style="width:19.8px">&lt;/</b><b class="m" style="width:39.6px">view</b><b class="b" style="width:9.9px">&gt;</b></div>
<div class="ln" style="top:405px">15</div>
<div class="cl" style="top:405px"><b class="b" style="width:9.9px">&lt;</b><b class="m" style="width:39.6px">view</b><b class="b" style="width:9.9px">&gt;</b><b class="k" style="width:118.8px">{{view_tx2}}</b><b class="b" style="width:19.8px">&lt;/</b><b class="m" style="width:39.6px">view</b><b class="b" style="width:9.9px">&gt;</b></div>
<div class="ln" style="top:432px">16</div>
<div class="cl" style="top:432px"><b class="b" style="width:9.9px">&lt;</b><b class="m" style="width:39.6px">view</b><b class="b" style="width:9.9px">&gt;</b></div>
<div class="ln" style="top:459px">17</div>
<div class="cl" style="top:459px"><b class="k" style="width:19.8px">  </b><b class="b" style="width:9.9px">&lt;</b><b class="m" style="width:59.4px">button</b><b class="k" style="width:9.9px"> </b><b class="r" style="width:69.3px">bindtap</b><b class="k" style="width:9.9px">=</b><b class="b" style="width:118.8px">"calandshow2</b><b class="b" style="width:9.9px">"</b><b class="r" style="width:49.5px">class</b><b class="k" style="width:9.9px">=</b><b class="b" style="width:49.5px">"bt3"</b><b class="b" style="width:9.9px">&gt;</b><b class="k" style="width:118.8px">{{view_butto</b><b class="k" style="width:39.6px">n3}}</b><b class="b" style="width:19.8px">&lt;/</b><b class="m" style="width:59.4px">button</b><b class="b" style="width:9.9px">&gt;</b></div>
<div class="ln" style="top:486px">18</div>
<div class="cl" style="top:486px"><b class="k" style="width:19.8px">  </b><b class="b" style="width:9.9px">&lt;</b><b class="m" style="width:59.4px">button</b><b class="k" style="width:9.9px"> </b><b class="r" style="width:69.3px">bindtap</b><b class="k" style="width:9.9px">=</b><b class="b" style="width:69.3px">"show2"</b><b class="r" style="width:49.5px">class</b><b class="k" style="width:9.9px">=</b><b class="b" style="width:49.5px">"bt4"</b><b class="b" style="width:9.9px">&gt;</b><b class="k" style="width:118.8px">{{view_butto</b><b class="k" style="width:39.6px">n4}}</b><b class="b" style="width:19.8px">&lt;/</b><b class="m" style="width:59.4px">button</b><b class="b" style="width:9.9px">&gt;</b></div>
<div class="ln" style="top:513px">19</div>
<div class="cl" style="top:513px"><b class="b" style="width:19.8px">&lt;/</b><b class="m" style="width:39.6px">view</b><b class="b" style="width:9.9px">&gt;</b></div>
<div class="ln" style="top:540px">20</div>
<div class="cl" style="top:540px"><b class="b" style="width:9.9px">&lt;</b><b class="m" style="width:39.6px">view</b><b class="b" style="width:9.9px">&gt;</b><b class="k" style="width:118.8px">{{view_tx3}}</b><b class="b" style="width:19.8px">&lt;/</b><b class="m" style="width:39.6px">view</b><b class="b" style="width:9.9px">&gt;</b></div>
<div class="ln" style="top:567px">21</div>
<div class="cl" style="top:567px"><b class="b" style="width:9.9px">&lt;</b><b class="m" style="width:39.6px">view</b><b class="b" style="width:9.9px">&gt;</b></div>
<div class="ln" style="top:594px">22</div>
<div class="cl" style="top:594px"><b class="k" style="width:19.8px">  </b><b class="b" style="width:9.9px">&lt;</b><b class="m" style="width:59.4px">button</b><b class="k" style="width:9.9px"> </b><b class="r" style="width:69.3px">bindtap</b><b class="k" style="width:9.9px">=</b><b class="b" style="width:118.8px">"calandshow3</b><b class="b" style="width:9.9px">"</b><b class="r" style="width:49.5px">class</b><b class="k" style="width:9.9px">=</b><b class="b" style="width:49.5px">"bt5"</b><b class="b" style="width:9.9px">&gt;</b><b class="k" style="width:118.8px">{{view_butto</b><b class="k" style="width:39.6px">n5}}</b><b class="b" style="width:19.8px">&lt;/</b><b class="m" style="width:59.4px">button</b><b class="b" style="width:9.9px">&gt;</b></div>
<div class="ln" style="top:621px">23</div>
<div class="cl" style="top:621px"><b class="k" style="width:19.8px">  </b><b class="b" style="width:9.9px">&lt;</b><b class="m" style="width:59.4px">button</b><b class="k" style="width:9.9px"> </b><b class="r" style="width:69.3px">bindtap</b><b class="k" style="width:9.9px">=</b><b class="b" style="width:69.3px">"show3"</b><b class="r" style="width:49.5px">class</b><b class="k" style="width:9.9px">=</b><b class="b" style="width:49.5px">"bt6"</b><b class="b" style="width:9.9px">&gt;</b><b class="k" style="width:118.8px">{{view_butto</b><b class="k" style="width:39.6px">n6}}</b><b class="b" style="width:19.8px">&lt;/</b><b class="m" style="width:59.4px">button</b><b class="b" style="width:9.9px">&gt;</b></div>
<div class="ln" style="top:648px">24</div>
<div class="cl" style="top:648px"><b class="b" style="width:19.8px">&lt;/</b><b class="m" style="width:39.6px">view</b><b class="b" style="width:9.9px">&gt;</b></div>
<div class="ln" style="top:675px">25</div>
<div class="cl" style="top:675px"><b class="b" style="width:9.9px">&lt;</b><b class="m" style="width:39.6px">view</b><b class="b" style="width:9.9px">&gt;</b><b class="k" style="width:118.8px">{{view_tx4}}</b><b class="b" style="width:19.8px">&lt;/</b><b class="m" style="width:39.6px">view</b><b class="b" style="width:9.9px">&gt;</b></div>
<div class="ln" style="top:702px">26</div>
<div class="cl" style="top:702px"><b class="b" style="width:9.9px">&lt;</b><b class="m" style="width:39.6px">view</b><b class="b" style="width:9.9px">&gt;</b></div>
<div class="ig" style="left:89.5px;top:54px;height:81px;background:#9e9e9e"></div>
<div class="ig" style="left:89.5px;top:324px;height:54px;background:#d3d3d3"></div>
<div class="ig" style="left:89.5px;top:459px;height:54px;background:#d3d3d3"></div>
<div class="ig" style="left:89.5px;top:594px;height:54px;background:#d3d3d3"></div>
<div class="ig" style="left:89.5px;top:729px;height:27px;background:#d3d3d3"></div>
</div>
<div class="abs" style="left:1898px;top:207px;width:22px;height:735px;background:#fff;border-left:1px solid #e4e4e4"></div>
<div class="abs" style="left:1899px;top:207px;width:21px;height:268px;background:#c1c1c1"></div>
<div class="abs" style="left:1899px;top:225px;width:21px;height:3px;background:#4f4f4f"></div>
<svg class="abs" style="left:1897px;top:800px" width="23" height="92" viewBox="0 0 23 92"><path d="M9.9 9.6 a4 4 0 0 1 8 0 V70.2 a8.6 8.6 0 1 1 -8 0 Z" fill="#6c7984" stroke="#5b6873" stroke-width="1"/><path d="M12.1 37 h3.6 V72 a5.8 5.8 0 1 1 -3.6 0 Z" fill="#2aa7e2"/><circle cx="13.9" cy="77.9" r="6.3" fill="#35aee6"/></svg>
<div class="hl" style="left:947px;top:942px;width:973px;height:2px;background:#d2d2d2"></div>
<div id="status" class="abs"><span style="left:14.5px">/miniprogram/pages/button/button.wxml</span><span style="left:365.5px">2.3 KB</span><span style="left:725px"><span class="cj" style="width:18px">行</span> 3<span class="cj" style="width:36px">，列</span> 33</span><span style="left:903px">WXML</span></div>
<div id="botr" class="abs"></div>
<div id="ime" class="abs">
<svg class="abs" style="left:0;top:0" width="228" height="32" viewBox="0 0 228 32"><rect x="5.4" y="0.6" width="2.8" height="2.8" fill="#c6c6c6"/><rect x="5.4" y="6.6" width="2.8" height="2.8" fill="#c6c6c6"/><rect x="5.4" y="12.6" width="2.8" height="2.8" fill="#c6c6c6"/><rect x="5.4" y="18.6" width="2.8" height="2.8" fill="#c6c6c6"/><rect x="5.4" y="24.6" width="2.8" height="2.8" fill="#c6c6c6"/><rect x="5.4" y="30.6" width="2.8" height="2.8" fill="#c6c6c6"/><rect x="18.5" y="4" width="23.6" height="23" fill="none" stroke="#6c6c6c" stroke-width="1.1"/><path d="M92 5.6 C99.6 6.4 104.4 13 101.6 19.8 C99 25.6 91.6 27.4 85.6 23.6 L87.8 20 C91 21.6 95.4 19.6 96.4 15.6 C97.2 12 95.2 8.4 92 5.6 Z" fill="#000"/><path d="M112.4 6.6 h8.2 v3.6 l-2.6 3.2 h-3.4 v-3 h-2.2 z" fill="#000"/><path d="M125.6 14.4 h6.6 l-3.6 7.4 h-6.8 l2 -3.6 h1.8 z" fill="#000"/><path d="M183.6 4.8 l2.4 0 l0.8 2.2 l2.2 0.9 l2.1 -1 l1.7 1.7 l-1 2.1 l0.9 2.2 l2.2 0.8 l0 2.4 l-2.2 0.8 l-0.9 2.2 l1 2.1 l-1.7 1.7 l-2.1 -1 l-2.2 0.9 l-0.8 2.2 l-2.4 0 l-0.8 -2.2 l-2.2 -0.9 l-2.1 1 l-1.7 -1.7 l1 -2.1 l-0.9 -2.2 l-2.2 -0.8 l0 -2.4 l2.2 -0.8 l0.9 -2.2 l-1 -2.1 l1.7 -1.7 l2.1 1 l2.2 -0.9 z" transform="translate(-1,1.1) scale(1.0)" fill="#000" stroke="#000" stroke-width="1.6" stroke-linejoin="round"/><rect x="180.6" y="14" width="4.4" height="4.4" fill="#fff"/><path d="M178 11.4 h2.2 v2.2 h-2.2z M185.4 11.4 h2.2 v2.2 h-2.2z M178 18.8 h2.2 v2.2 h-2.2z M185.4 18.8 h2.2 v2.2 h-2.2z M181.8 9.4 h2 v2 h-2z M181.8 21 h2 v2 h-2z M176 15.2 h2 v2 h-2z M187.6 15.2 h2 v2 h-2z" fill="#fff"/><rect x="212" y="10.2" width="6.8" height="2.2" fill="#000"/><rect x="212" y="15.6" width="6.8" height="2.2" fill="#000"/><path d="M211.2 20.6 h8.4 l-4.2 4.4 z" fill="#000"/></svg>
<div class="abs" style="left:20.5px;top:4px;width:20px;height:23px;line-height:24px;font-size:18px;text-align:center;color:#222"><span class="cj" style="width:18px">拼</span></div>
<div class="abs" style="left:51px;top:2px;height:28px;line-height:29px;font-size:24px;font-weight:700;color:#000"><span class="cj" style="width:24px">英</span></div>
<div class="abs" style="left:140.6px;top:2px;height:28px;line-height:29px;font-size:24px;font-weight:700;color:#000"><span class="cj" style="width:24px">简</span></div>
</div>
</body></html>
